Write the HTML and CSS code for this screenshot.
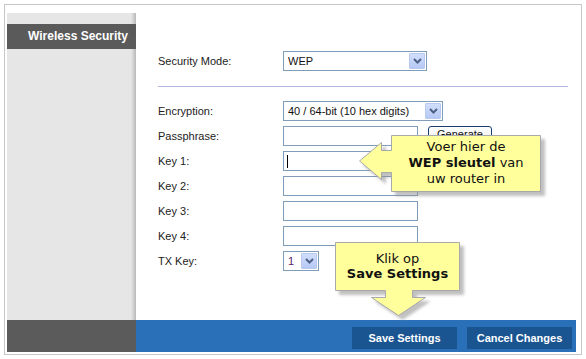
FILE: index.html
```html
<!DOCTYPE html>
<html lang="nl">
<head>
    <meta charset="UTF-8">
    <title>Wireless Security</title>
    <link rel="stylesheet" href="styles.css">
</head>
<body>
    <div class="frame">
        <div class="app">
            <aside class="sidebar">
                <h2 class="side-title">Wireless Security</h2>
            </aside>

            <main class="content">
                <div class="row row-mode">
                    <label>Security Mode:</label>
                    <div class="select sel-mode">
                        <span>WEP</span>
                        <i class="drop"><svg width="9" height="6" viewBox="0 0 9 6"><polyline points="1,1 4.5,4.5 8,1" fill="none" stroke="#4d6185" stroke-width="2"/></svg></i>
                    </div>
                </div>

                <hr class="divider">

                <div class="row">
                    <label>Encryption:</label>
                    <div class="select sel-enc">
                        <span>40 / 64-bit (10 hex digits)</span>
                        <i class="drop"><svg width="9" height="6" viewBox="0 0 9 6"><polyline points="1,1 4.5,4.5 8,1" fill="none" stroke="#4d6185" stroke-width="2"/></svg></i>
                    </div>
                </div>
                <div class="row">
                    <label>Passphrase:</label>
                    <div class="field"></div>
                    <button class="gen-btn">Generate</button>
                </div>
                <div class="row">
                    <label>Key 1:</label>
                    <div class="field"><span class="caret"></span></div>
                </div>
                <div class="row">
                    <label>Key 2:</label>
                    <div class="field"></div>
                </div>
                <div class="row">
                    <label>Key 3:</label>
                    <div class="field"></div>
                </div>
                <div class="row">
                    <label>Key 4:</label>
                    <div class="field"></div>
                </div>
                <div class="row">
                    <label>TX Key:</label>
                    <div class="select sel-tx">
                        <span class="tx-val">1</span>
                        <i class="drop"><svg width="9" height="6" viewBox="0 0 9 6"><polyline points="1,1 4.5,4.5 8,1" fill="none" stroke="#4d6185" stroke-width="2"/></svg></i>
                    </div>
                </div>
            </main>

            <div class="foot-left"></div>
            <div class="foot-bar">
                <button class="foot-btn">Save Settings</button>
                <button class="foot-btn">Cancel Changes</button>
            </div>
        </div>
    </div>

    <!-- uitleg ballonnen -->
    <svg class="callouts" width="586" height="359" viewBox="0 0 586 359">
        <defs>
            <filter id="shadow" x="-20%" y="-20%" width="140%" height="140%">
                <feDropShadow dx="4" dy="4" stdDeviation="1.5" flood-color="#8c8c8c" flood-opacity="0.55"/>
            </filter>
        </defs>
        <path d="M391.5,135.5 H540.5 V191.5 H391.5 V172.5 H381.5 V179.5 L359.5,161 L381.5,142.5 V150.5 H391.5 Z" fill="#ffff9c" stroke="#a9a9a9" filter="url(#shadow)"/>
        <path d="M335.5,242.5 H459.5 V290.5 H412.5 V297.5 H425.5 L398.5,315.5 L371.5,297.5 H385.5 V290.5 H335.5 Z" fill="#ffff9c" stroke="#a9a9a9" filter="url(#shadow)"/>
    </svg>
    <div class="tip tip-key">Voer hier de<br><b>WEP sleutel</b> van<br>uw router in</div>
    <div class="tip tip-save">Klik op<br><b>Save Settings</b></div>
</body>
</html>
```

FILE: styles.css
```css
* {
    margin: 0;
    padding: 0;
    box-sizing: border-box;
}

body {
    font-family: 'Liberation Sans', Arial, sans-serif;
    background: white;
    color: #222;
    position: relative;
    width: 586px;
    height: 359px;
    overflow: hidden;
}

.frame {
    margin: 4px 0 0 4px;
    width: 578px;
    height: 351px;
    border: 1px solid #c6c6c6;
    padding: 8px 5px 2px 2px;
}

.app {
    display: grid;
    grid-template-columns: 129px 1fr;
    grid-template-rows: 307px 32px;
    height: 100%;
}

.sidebar {
    background: linear-gradient(90deg, #e6e6e6 0, #e6e6e6 124px, #b9b9b9 129px);
    padding-top: 11px;
}

.side-title {
    height: 25px;
    line-height: 25px;
    background: #5a5a5a;
    color: white;
    font-size: 12px;
    font-weight: bold;
    text-align: right;
    padding-right: 8px;
}

.content {
    padding: 38px 8px 0 22px;
}

.row {
    display: flex;
    align-items: center;
    height: 20px;
    margin-bottom: 5px;
}

.row-mode {
    margin-bottom: 0;
}

.row label {
    width: 125px;
    font-size: 11px;
    flex-shrink: 0;
}

.divider {
    border: none;
    border-top: 1px solid #b4b4e4;
    margin: 15px 0 14px;
}

.select {
    height: 20px;
    border: 1px solid #7f9db9;
    background: white;
    display: flex;
    align-items: center;
    justify-content: space-between;
    padding-left: 4px;
    font-size: 11px;
    color: #111;
}

.sel-mode { width: 144px; }
.sel-enc { width: 160px; }
.sel-tx { width: 36px; }

.tx-val {
    color: #5a1a6a;
}

.drop {
    width: 16px;
    height: 16px;
    margin: 1px;
    border: 1px solid #b8c8ee;
    border-radius: 1px;
    background: linear-gradient(180deg, #d2defc 0%, #b5c8f5 100%);
    display: flex;
    align-items: center;
    justify-content: center;
}

.field {
    width: 135px;
    height: 20px;
    border: 1px solid #7f9db9;
    background: white;
    display: flex;
    align-items: center;
}

.caret {
    width: 1px;
    height: 13px;
    background: black;
    margin-left: 3px;
}

.gen-btn {
    margin-left: 10px;
    align-self: flex-start;
    width: 64px;
    height: 18px;
    padding-bottom: 2px;
    border: 1px solid #1c3d6c;
    border-radius: 3px;
    background: linear-gradient(180deg, #ffffff 0%, #ecebe6 100%);
    font-family: 'Liberation Sans', Arial, sans-serif;
    font-size: 11px;
    line-height: 12px;
    color: #111;
}

.foot-left {
    background: #5b5b5b;
}

.foot-bar {
    background: #2970b8;
    display: flex;
    justify-content: flex-end;
    align-items: flex-end;
    gap: 10px;
    padding: 0 4px 3px 0;
}

.foot-btn {
    width: 105px;
    height: 22px;
    border: none;
    background: #1a5592;
    color: white;
    font-family: 'Liberation Sans', Arial, sans-serif;
    font-size: 11px;
    font-weight: bold;
}

/* ballonnen over de pagina */
.callouts {
    position: absolute;
    left: 0;
    top: 0;
    pointer-events: none;
}

.tip {
    position: absolute;
    font-family: 'DejaVu Sans', Verdana, sans-serif;
    font-size: 13px;
    color: #111;
    text-align: center;
}

.tip-key {
    left: 391px;
    top: 135px;
    width: 150px;
    padding-top: 4px;
    line-height: 16px;
}

.tip-save {
    left: 335px;
    top: 242px;
    width: 125px;
    padding-top: 9px;
    line-height: 15px;
}
```
